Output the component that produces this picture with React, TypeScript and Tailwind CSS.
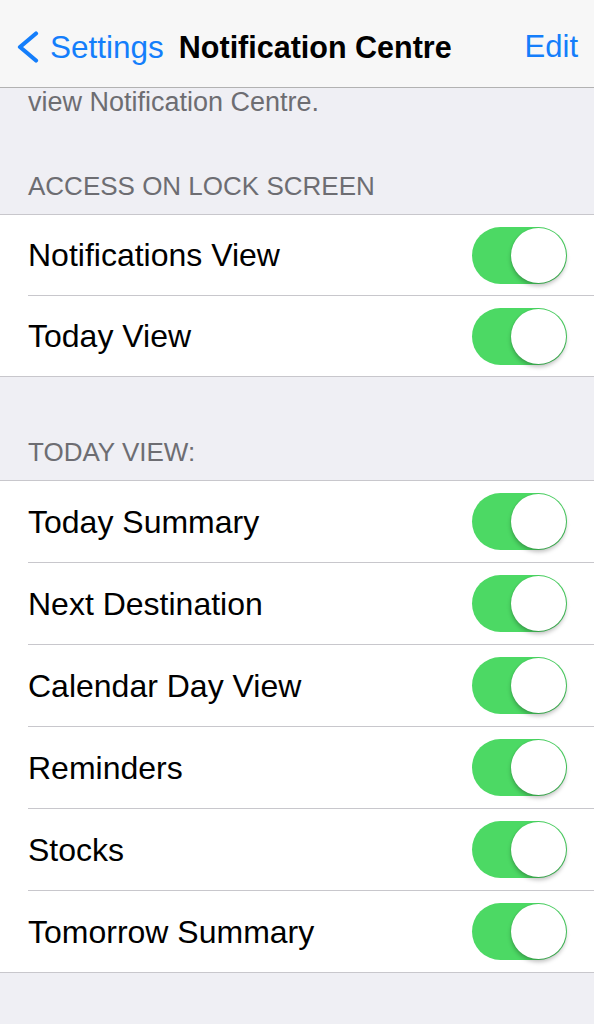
const lockScreen = ['Notifications View', 'Today View'];
const todayView = [
  'Today Summary',
  'Next Destination',
  'Calendar Day View',
  'Reminders',
  'Stocks',
  'Tomorrow Summary',
];

const Toggle = () => (
  <div className="relative h-[57px] w-[95px] shrink-0 rounded-full bg-[#4cd964]">
    <div className="absolute right-[1px] top-[1px] h-[55px] w-[55px] rounded-full bg-white shadow-[0_3px_4px_rgba(0,0,0,0.25),0_0_0_1px_rgba(0,0,0,0.04)]" />
  </div>
);

const Group = ({ items, rowH }: { items: string[]; rowH: string }) => (
  <div className="border-y border-[#c8c7cc] bg-white">
    {items.map((label, i) => (
      <div key={label} className="pl-[28px]">
        {i > 0 && <div className="h-px bg-[#c8c7cc]" />}
        <div className={`flex ${rowH} items-center justify-between pr-[27px]`}>
          <span className="text-[32px] leading-[36px] text-black">{label}</span>
          <Toggle />
        </div>
      </div>
    ))}
  </div>
);

const SectionHeader = ({ title, top }: { title: string; top: string }) => (
  <div className={`${top} pb-[13px] pl-[28px] text-[26px] leading-[30px] text-[#6d6d72]`}>{title}</div>
);

export default function App() {
  return (
    <div className="min-h-screen bg-[#efeff4] font-['Liberation_Sans',Arial,sans-serif]">
      {/* Nav bar */}
      <div className="flex h-[88px] items-center border-b border-[#b2b2b2] bg-[#f7f7f7] pt-[6px] pl-[15px] pr-[16px]">
        <svg width="24" height="32" viewBox="0 0 24 32" className="shrink-0">
          <polyline points="21,2.5 5,16 21,29.5" fill="none" stroke="#147efb" strokeWidth="4.2" strokeLinecap="round" strokeLinejoin="round" />
        </svg>
        <span className="ml-[11px] text-[31.5px] leading-[36px] text-[#147efb]">Settings</span>
        <span className="ml-[15px] text-[30.5px] font-bold leading-[36px] text-black">Notification Centre</span>
        <span className="ml-auto text-[31px] leading-[36px] text-[#147efb]">Edit</span>
      </div>

      <div className="pl-[28px] text-[27px] leading-[28px] text-[#6d6d72]">view Notification Centre.</div>

      <SectionHeader title="ACCESS ON LOCK SCREEN" top="pt-[55px]" />
      <Group items={lockScreen} rowH="h-[80px]" />

      <SectionHeader title="TODAY VIEW:" top="pt-[60px]" />
      <Group items={todayView} rowH="h-[81px]" />
    </div>
  );
}
